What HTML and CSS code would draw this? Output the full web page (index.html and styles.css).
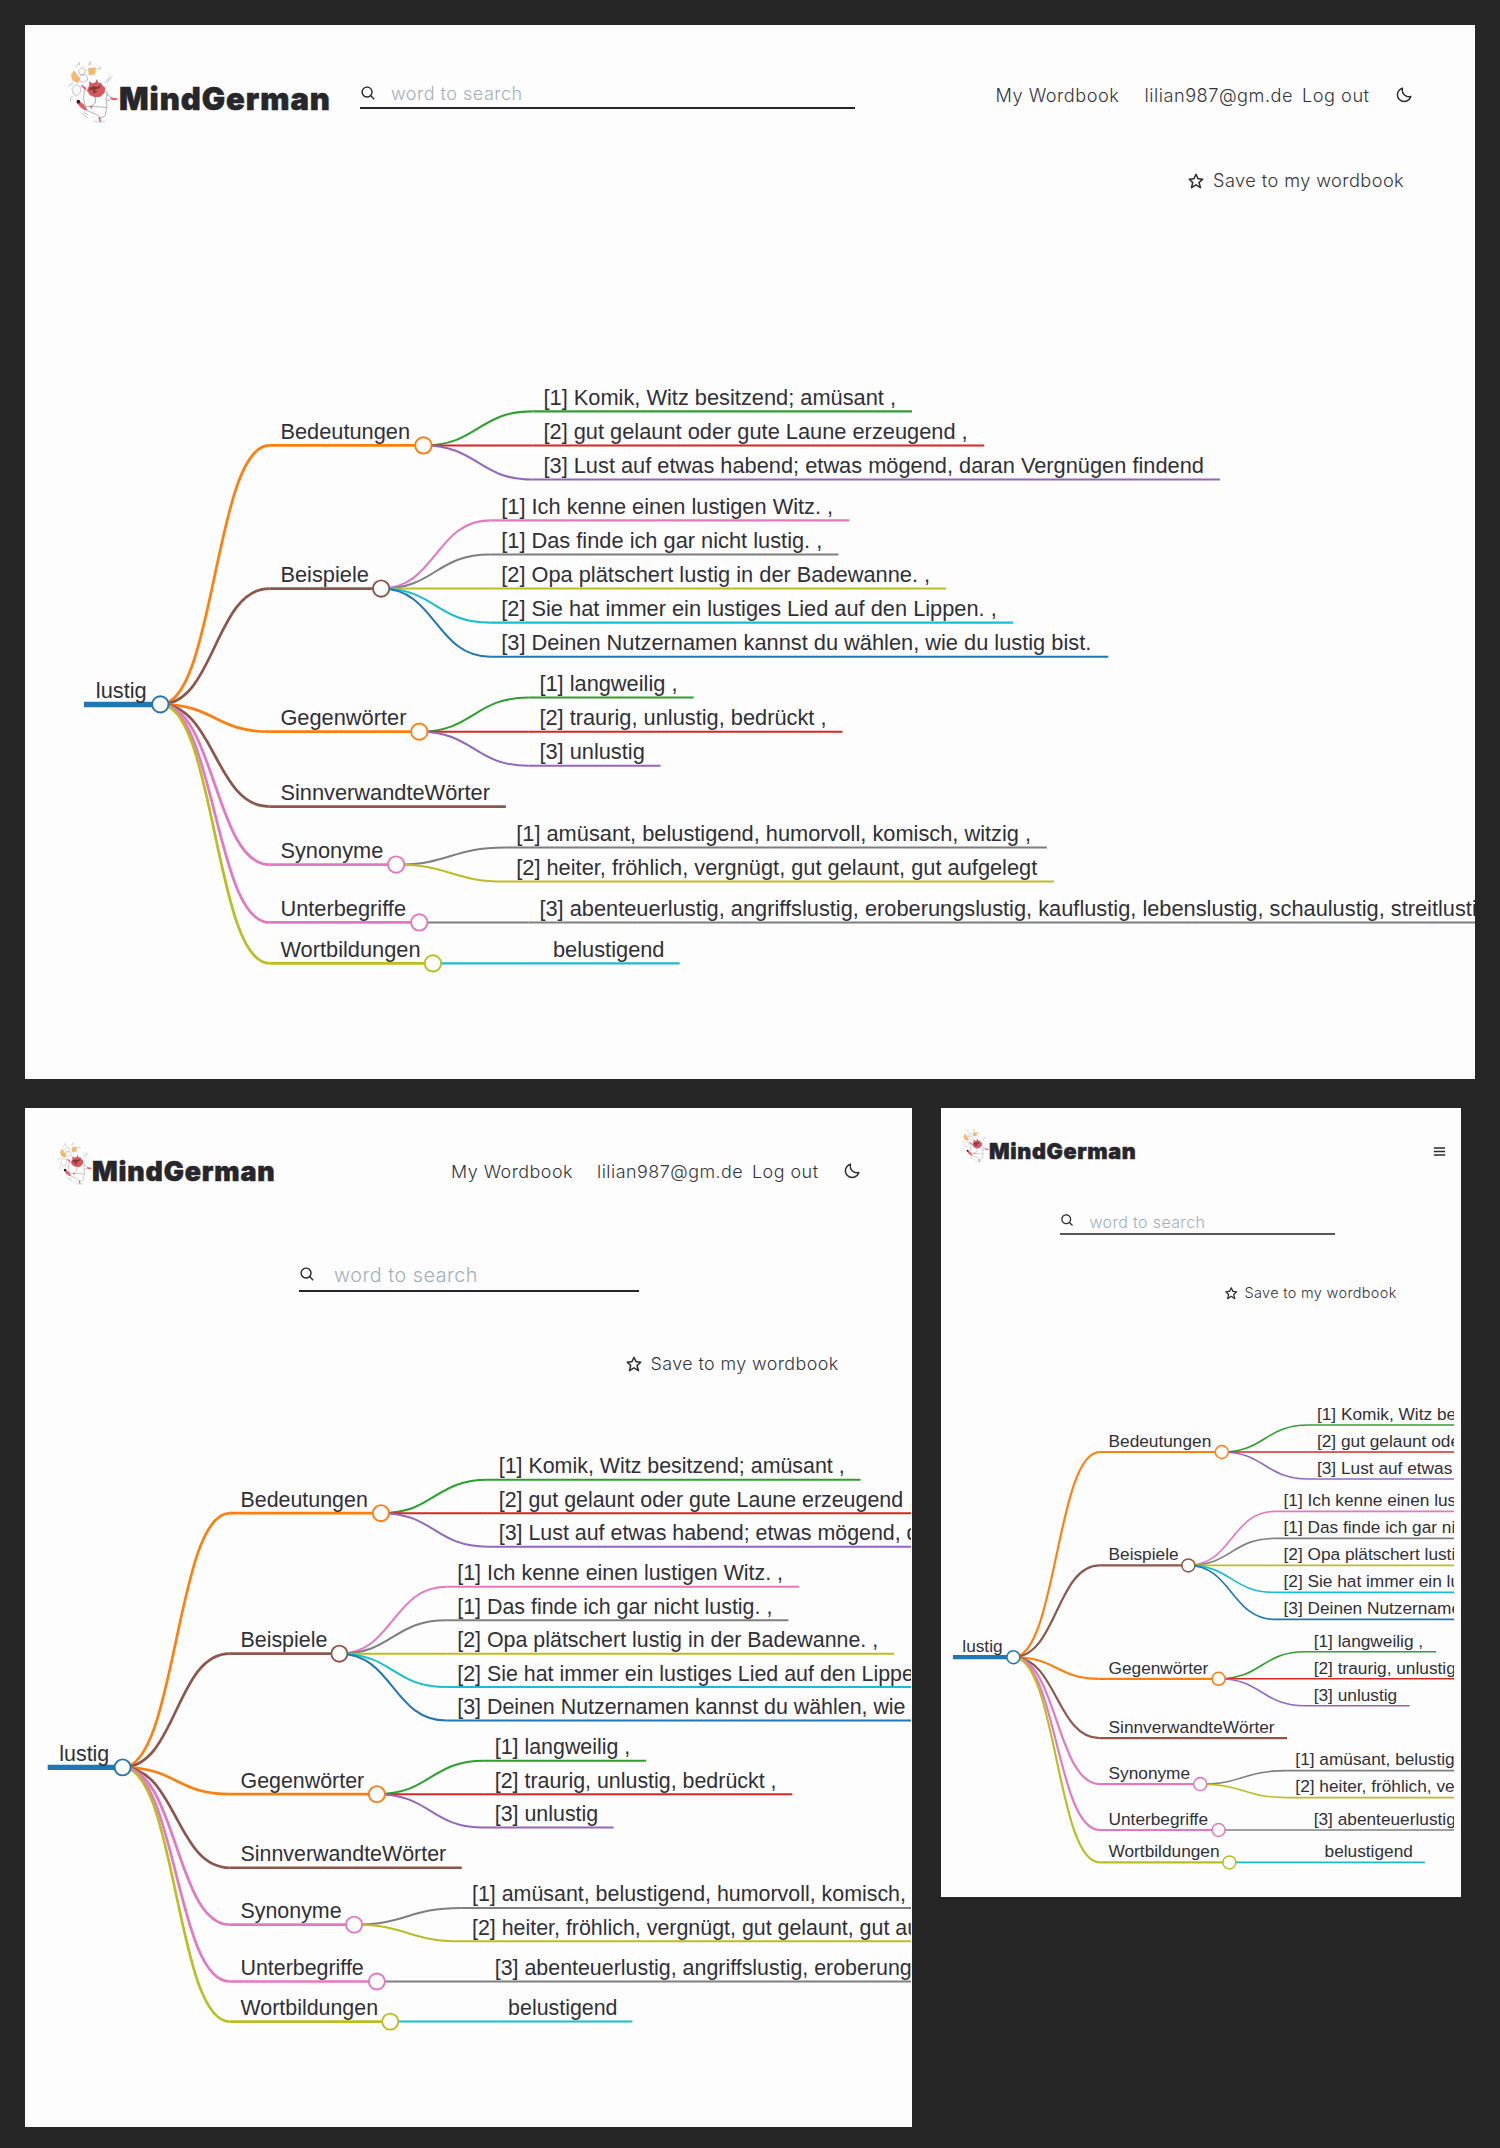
FILE: index.html
```html
<!DOCTYPE html>
<html lang="de">
<head>
<meta charset="utf-8">
<title>MindGerman</title>
<link rel="stylesheet" href="styles.css">
</head>
<body>
<svg class="sprite" aria-hidden="true">
  <symbol id="i-search" viewBox="0 0 24 24"><path d="M10 18a7.952 7.952 0 0 0 4.897-1.688l4.396 4.396 1.414-1.414-4.396-4.396A7.952 7.952 0 0 0 18 10c0-4.411-3.589-8-8-8s-8 3.589-8 8 3.589 8 8 8zm0-14c3.309 0 6 2.691 6 6s-2.691 6-6 6-6-2.691-6-6 2.691-6 6-6z"/></symbol>
  <symbol id="i-moon" viewBox="0 0 24 24"><path d="M20.742 13.045a8.088 8.088 0 0 1-2.077.271c-2.135 0-4.14-.83-5.646-2.336a8.025 8.025 0 0 1-2.064-7.723A1 1 0 0 0 9.73 2.034a10.014 10.014 0 0 0-4.489 2.582c-3.898 3.898-3.898 10.243 0 14.143a9.937 9.937 0 0 0 7.072 2.93 9.93 9.93 0 0 0 7.07-2.929 10.007 10.007 0 0 0 2.583-4.491 1.001 1.001 0 0 0-1.224-1.224zm-2.772 4.301a7.947 7.947 0 0 1-5.656 2.343 7.953 7.953 0 0 1-5.658-2.344c-3.118-3.119-3.118-8.195 0-11.314a7.923 7.923 0 0 1 2.06-1.483 10.027 10.027 0 0 0 2.89 7.848 9.972 9.972 0 0 0 7.848 2.891 8.036 8.036 0 0 1-1.484 2.059z"/></symbol>
  <symbol id="i-star" viewBox="0 0 24 24"><path d="m6.516 14.323-1.49 6.452a.998.998 0 0 0 1.529 1.057L12 18.202l5.445 3.63a1.001 1.001 0 0 0 1.517-1.106l-1.829-6.4 4.536-4.082a1 1 0 0 0-.59-1.74l-5.701-.454-2.467-5.461a.998.998 0 0 0-1.822 0L8.622 8.05l-5.701.453a1 1 0 0 0-.619 1.713l4.214 4.107zm2.853-4.326a.998.998 0 0 0 .832-.586L12 5.43l1.799 3.981a.998.998 0 0 0 .832.586l3.972.315-3.271 2.944c-.284.256-.397.65-.293 1.018l1.253 4.385-3.736-2.491a.995.995 0 0 0-1.109 0l-3.904 2.603 1.05-4.546a1 1 0 0 0-.276-.94l-3.038-2.962 4.09-.326z"/></symbol>
  <symbol id="i-menu" viewBox="0 0 24 24"><path d="M4 6h16v2H4zm0 5h16v2H4zm0 5h16v2H4z"/></symbol>
  <symbol id="mascot" viewBox="205 180 150 190">
    <ellipse cx="299" cy="364" rx="20" ry="5" fill="#dcebf7"/>
    <g fill="none" stroke="#a9a9ab" stroke-width="2">
      <path d="M229 201l9-15 2 9M265 195l6-11 3 2-2 9M290 207l12-5v6M316 247l14-18M322 248l15-20M206 260l6-9 8 0M212 304l1-12 6-4M246 337l10 11 10 4M252 336l14 8"/>
      <path d="M237 213l9-12 12 9-5 14-12-1zM238 232l9-10 14 3 3 14-13 7-10-4zM217 265l11-12 14 6 1 16-12 12-9-6z"/>
    </g>
    <path d="M215 224l8-13 18 26-7 11-15-8z" fill="#fbb765" stroke="#c9a070" stroke-width="1"/>
    <path d="M266 204l22-2-3 20-17 2z" fill="#fbb765" stroke="#c9a070" stroke-width="1"/>
    <path d="M254 268l-2 27 8 35 30 12 13 11 13-7 6-28-3-24 4-16-10-5-14 15-35-15z" fill="#fefefe" stroke="#8e8e90" stroke-width="2"/>
    <path d="M262 318l60 3M288 288l-1 20-12 9M321 282l15 10-8 9-8-3" fill="none" stroke="#8e8e90" stroke-width="2"/>
    <path d="M243 254l6 1 12 9-5 5-8-8zM334 290l9 3 11 1-2 5-12 1-7-4zM296 350l6 1 2 14h-4zM271 317l5-2 2 4-4 8z" fill="#e8626b"/>
    <path d="M232 307l7-5 13 10 11 17-8 1-14-10z" fill="#e36068"/>
    <circle cx="236" cy="304" r="5.5" fill="#222"/>
    <path d="M268 243l9 6 9-2 6-11 4 12 8-1 4 8 9 8-3 15-12 11-17 2-15-7-8-15 7-14z" fill="#d95860"/>
    <path d="M270 262l13-5 9 3 11-5-3 9-12 3 5 7-12 6-3-13-10 5z" fill="#7c3b38"/>
    <path d="M284 272l7-2" stroke="#9aa35c" stroke-width="2"/>
  </symbol>
</svg>

<main class="board">
  <section class="screen desktop">
    <header class="topbar">
      <a class="brand"><svg class="mascot"><use href="#mascot"/></svg><h1 class="wordmark">MindGerman</h1></a>
      <label class="search"><svg class="icon"><use href="#i-search"/></svg><span class="placeholder">word to search</span></label>
      <nav class="menu">
        <a class="link wordbook">My Wordbook</a><a class="link account">lilian987@gm.de</a><a class="link logout">Log out</a>
        <svg class="icon"><use href="#i-moon"/></svg>
      </nav>
    </header>
    <div class="save"><svg class="icon"><use href="#i-star"/></svg><span class="save-label">Save to my wordbook</span></div>
    <svg class="map" data-x="59" data-y="506.4" data-scale="1.363"></svg>
  </section>

  <div class="small-screens">
    <section class="screen tablet">
      <header class="topbar">
        <a class="brand"><svg class="mascot"><use href="#mascot"/></svg><h1 class="wordmark">MindGerman</h1></a>
        <nav class="menu">
          <a class="link wordbook">My Wordbook</a><a class="link account">lilian987@gm.de</a><a class="link logout">Log out</a>
          <svg class="icon"><use href="#i-moon"/></svg>
        </nav>
      </header>
      <label class="search"><svg class="icon"><use href="#i-search"/></svg><span class="placeholder">word to search</span></label>
      <div class="save"><svg class="icon"><use href="#i-star"/></svg><span class="save-label">Save to my wordbook</span></div>
      <svg class="map" data-x="22.7" data-y="331.4" data-scale="1.338"></svg>
    </section>

    <section class="screen phone">
      <header class="topbar">
        <a class="brand"><svg class="mascot"><use href="#mascot"/></svg><h1 class="wordmark">MindGerman</h1></a>
        <svg class="icon burger"><use href="#i-menu"/></svg>
      </header>
      <label class="search"><svg class="icon"><use href="#i-search"/></svg><span class="placeholder">word to search</span></label>
      <div class="save"><svg class="icon"><use href="#i-star"/></svg><span class="save-label">Save to my wordbook</span></div>
      <svg class="map" data-x="11.9" data-y="306.2" data-scale="1.08"></svg>
    </section>
  </div>
</main>
<script src="map.js"></script>
</body>
</html>
```
FILE: styles.css
```css
* { box-sizing: border-box; }
body {
  margin: 0;
  background: #262626;
  color: #26262b;
  font-family: Inter, "Liberation Sans", sans-serif;
}
.sprite { display: none; }
.board { display: flex; flex-direction: column; gap: 29px; padding: 25px; height: 2148px; overflow: hidden; }
.small-screens { display: flex; align-items: flex-start; gap: 29px; }
.screen { display: flex; flex-direction: column; background: #fdfdfd; overflow: hidden; flex: none; }
.topbar { display: flex; align-items: center; flex: none; }
.brand { display: flex; align-items: center; flex: none; }
.mascot { flex: none; }
.wordmark { margin: 0; font-weight: 900; white-space: nowrap; line-height: 1; -webkit-text-stroke: 0.5px #26262b; }
.icon { fill: #2b2b30; flex: none; }
.menu { display: flex; align-items: center; flex: none; }
.link, .save-label { font-weight: 350; white-space: nowrap; color: #35363c; flex: none; }
.search { display: flex; align-items: center; flex: none; border-bottom: 2px solid #26262b; }
.placeholder { color: #a3b0ba; font-weight: 350; white-space: nowrap; margin-top: 1px; }
.save { display: flex; align-items: center; flex: none; }
.map { display: block; flex: 1; min-height: 0; overflow: hidden; }
.map text { font: 16px "Liberation Sans", Arial, sans-serif; fill: #303036; white-space: pre; }
.map path { fill: none; }
.map circle { fill: #fdfdfd; stroke-width: 1.4; }

/* desktop */
.desktop { width: 1450px; height: 1054px; }
.desktop .topbar { height: 139px; padding-left: 43px; }
.desktop .mascot { width: 50px; height: 64px; margin-top: -5px; }
.desktop .wordmark { font-size: 31px; letter-spacing: 0.95px; margin: 8px 0 0 0; width: 217.5px; padding-left: 1px; }
.desktop .search { width: 494.5px; height: 31px; margin: -2px 0 0 24.5px; }
.desktop .search .icon { width: 17px; height: 17px; margin-top: 2px; }
.desktop .placeholder { font-size: 18px; letter-spacing: 0.5px; margin-left: 14px; }
.desktop .menu { margin-left: 141px; font-size: 18.2px; letter-spacing: 0.5px; }
.desktop .wordbook { width: 149px; }
.desktop .account { width: 157.5px; }
.desktop .logout { width: 92.5px; }
.desktop .menu .icon { width: 18px; height: 18px; }
.desktop .save { height: 34px; padding-left: 1162px; font-size: 18.2px; letter-spacing: 0.42px; }
.desktop .save .icon { width: 18px; height: 18px; margin-right: 8px; }
.desktop .save-label { margin-top: -2px; }
.desktop .map { width: 1450px; }

/* tablet */
.tablet { width: 887px; height: 1019px; }
.tablet .topbar { height: 126px; padding-left: 33px; }
.tablet .mascot { width: 34px; height: 43px; margin-top: -15px; }
.tablet .wordmark { font-size: 26.8px; letter-spacing: 0.85px; width: 191px; }
.tablet .menu { margin-left: 168px; font-size: 17.9px; letter-spacing: 0.5px; }
.tablet .wordbook { width: 146px; }
.tablet .account { width: 155px; }
.tablet .logout { width: 91px; }
.tablet .menu .icon { width: 18px; height: 18px; }
.tablet .search { width: 340px; height: 34px; margin: 24px 0 0 273.5px; }
.tablet .search .icon { width: 17px; height: 17px; }
.tablet .placeholder { font-size: 19.8px; letter-spacing: 0.5px; margin-left: 18.5px; margin-top: 2px; }
.tablet .save { height: 144px; padding-left: 600px; font-size: 17.9px; letter-spacing: 0.42px; }
.tablet .save .icon { width: 18px; height: 18px; margin-right: 7.5px; }
.tablet .save-label { margin-top: -2px; }
.tablet .map { width: 885.5px; }

/* phone */
.phone { width: 519.5px; height: 788.5px; }
.phone .topbar { height: 87px; padding-left: 21px; }
.phone .mascot { width: 27px; height: 35px; margin-top: -12px; }
.phone .wordmark { font-size: 21.6px; letter-spacing: 0.65px; width: 149px; }
.phone .burger { width: 17px; height: 17px; margin-left: 293px; }
.phone .search { width: 275px; height: 27px; margin: 13px 0 0 119px; border-bottom-color: #57575b; }
.phone .search .icon { width: 15px; height: 15px; }
.phone .placeholder { font-size: 16px; letter-spacing: 0.35px; margin-left: 14.5px; margin-top: 2px; }
.phone .save { height: 116px; padding-left: 283px; font-size: 14.5px; letter-spacing: 0.32px; }
.phone .save .icon { width: 14.5px; height: 14.5px; margin-right: 6px; }
.phone .save-label { margin-top: -2px; }
.phone .map { width: 513px; }
```
FILE: map.js
```js
// Mind map of the entry "lustig", drawn into every .map element.
const C = {
  blue: '#1f77b4', orange: '#ff7f0e', green: '#2ca02c', red: '#d62728', purple: '#9467bd',
  brown: '#8c564b', pink: '#e377c2', gray: '#7f7f7f', olive: '#bcbd22', cyan: '#17becf'
};
const GAP = 80;
const STROKE = [4, 2, 1.5];

// y is the offset from the root's line, w the length of the node's underline
const root = {
  text: 'lustig', y: 0, w: 56, color: C.blue, children: [
    { text: 'Bedeutungen', y: -190, w: 113, color: C.orange, children: [
      { text: '[1] Komik, Witz besitzend; amüsant ,', y: -215, w: 278.5, color: C.green },
      { text: '[2] gut gelaunt oder gute Laune erzeugend ,', y: -190, w: 331.5, color: C.red },
      { text: '[3] Lust auf etwas habend; etwas mögend, daran Vergnügen findend', y: -165, w: 504.5, color: C.purple }
    ] },
    { text: 'Beispiele', y: -85, w: 82, color: C.brown, children: [
      { text: '[1] Ich kenne einen lustigen Witz. ,', y: -135, w: 263.5, color: C.pink },
      { text: '[1] Das finde ich gar nicht lustig. ,', y: -110, w: 255.5, color: C.gray },
      { text: '[2] Opa plätschert lustig in der Badewanne. ,', y: -85, w: 334.5, color: C.olive },
      { text: '[2] Sie hat immer ein lustiges Lied auf den Lippen. ,', y: -60, w: 383.5, color: C.cyan },
      { text: '[3] Deinen Nutzernamen kannst du wählen, wie du lustig bist.', y: -35, w: 453.5, color: C.blue }
    ] },
    { text: 'Gegenwörter', y: 20, w: 110, color: C.orange, children: [
      { text: '[1] langweilig ,', y: -5, w: 121.3, color: C.green },
      { text: '[2] traurig, unlustig, bedrückt ,', y: 20, w: 230.5, color: C.red },
      { text: '[3] unlustig', y: 45, w: 97, color: C.purple }
    ] },
    { text: 'SinnverwandteWörter', y: 75, w: 173.5, color: C.brown },
    { text: 'Synonyme', y: 117.5, w: 93, color: C.pink, children: [
      { text: '[1] amüsant, belustigend, humorvoll, komisch, witzig ,', y: 105, w: 397.5, color: C.gray },
      { text: '[2] heiter, fröhlich, vergnügt, gut gelaunt, gut aufgelegt', y: 130, w: 402.5, color: C.olive }
    ] },
    { text: 'Unterbegriffe', y: 160, w: 110, color: C.pink, children: [
      { text: '[3] abenteuerlustig, angriffslustig, eroberungslustig, kauflustig, lebenslustig, schaulustig, streitlustig', y: 160, w: 740, color: C.gray }
    ] },
    { text: 'Wortbildungen', y: 190, w: 120, color: C.olive, children: [
      { text: 'belustigend', y: 190, w: 101, color: C.cyan }
    ] }
  ]
};

function drawNode(node, x, depth) {
  const end = x + node.w;
  const mid = end + GAP / 2;
  const kids = node.children || [];
  let out = '';
  for (const k of kids) {
    out += `<path d="M${end} ${node.y}C${mid} ${node.y} ${mid} ${k.y} ${end + GAP} ${k.y}" stroke="${k.color}" stroke-width="${STROKE[depth + 1]}"/>`;
  }
  out += `<path d="M${x} ${node.y}H${end}" stroke="${node.color}" stroke-width="${STROKE[depth]}"/>`;
  out += `<text x="${x + (depth ? 8.1 : 8.7)}" y="${node.y - 4.8}">${node.text}</text>`;
  for (const k of kids) out += drawNode(k, end + GAP, depth + 1);
  if (kids.length) out += `<circle cx="${end}" cy="${node.y}" r="6" stroke="${node.color}"/>`;
  return out;
}

for (const el of document.querySelectorAll('.map')) {
  const { x, y, scale } = el.dataset;
  el.innerHTML = `<g transform="translate(${x} ${y}) scale(${scale})">${drawNode(root, 0, 0)}</g>`;
}
```
